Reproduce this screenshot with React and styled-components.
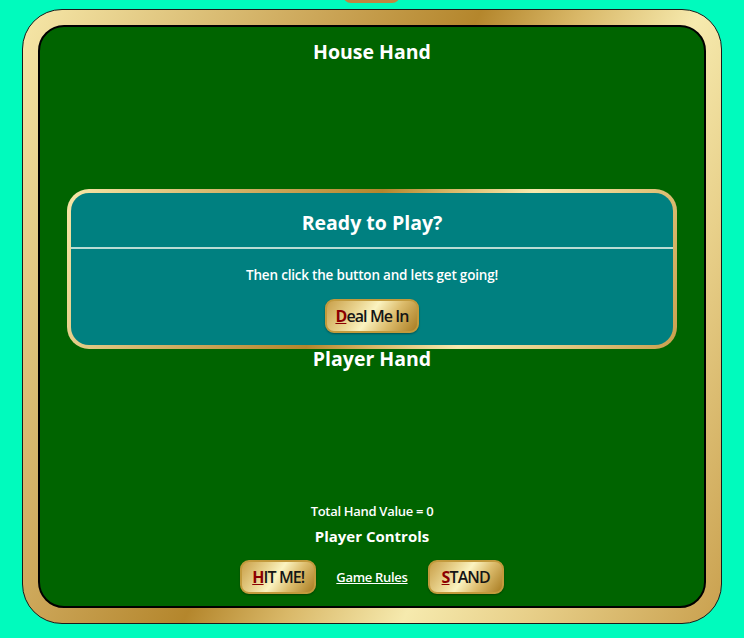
import React from 'react';
import styled, { createGlobalStyle } from 'styled-components';

const gold =
  'linear-gradient(116deg, #f6e7a8 0%, #dcc078 18%, #c9a253 32%, #b4862c 46%, #d9b868 56%, #f6eaae 68%, #e8d08a 80%, #c9a04e 100%)';

const GlobalStyle = createGlobalStyle`
  html, body {
    margin: 0;
    padding: 0;
    background: #00fbbd;
    font-family: "Open Sans", "Noto Sans", sans-serif;
  }
  body {
    position: relative;
  }
`;

// a tab of some menu, mostly scrolled above the page edge
const TopTab = styled.div`
  position: absolute;
  top: -30px;
  left: 343px;
  width: 57px;
  height: 33px;
  border-radius: 0 0 8px 8px;
  background: #bf873f;
`;

const Frame = styled.div`
  width: 700px;
  height: 615px;
  margin: 9px auto 0;
  box-sizing: border-box;
  padding: 15px;
  border: 1px solid #1a1a1a;
  border-radius: 40px;
  background: ${gold};
`;

const Table = styled.main`
  position: relative;
  height: 100%;
  box-sizing: border-box;
  display: flex;
  flex-direction: column;
  align-items: center;
  padding: 11px 0 12px;
  border: 2px solid #000;
  border-radius: 26px;
  background: #006400;
  color: #fff;
`;

const HandTitle = styled.h2`
  margin: 0;
  font-size: 19.5px;
  line-height: 27px;
  font-weight: 700;
`;

const HandArea = styled.div`
  width: 100%;
  height: ${(p) => p.$h}px;
`;

const Total = styled.p`
  margin: 0;
  font-size: 13px;
  line-height: 18px;
  font-weight: 600;
  letter-spacing: -0.3px;
`;

const ControlsTitle = styled.h3`
  margin: 6px 0 0;
  font-size: 15px;
  line-height: 20px;
  font-weight: 700;
`;

const ControlsRow = styled.div`
  display: flex;
  align-items: center;
  gap: 20px;
  margin-top: 14px;
`;

const GoldButton = styled.button`
  height: 34px;
  padding: 0 ${(p) => p.$pad || 9}px;
  border: 2px solid #c29a3c;
  border-radius: 9px;
  background: linear-gradient(125deg, #c9a04a 0%, #e9d38e 30%, #fbf3c0 48%, #dcbc6c 70%, #a97c22 100%);
  box-shadow: 0 1px 2px rgba(0, 0, 0, 0.35);
  font-family: "Open Sans", "Noto Sans", sans-serif;
  font-size: 16px;
  font-weight: 600;
  letter-spacing: -0.9px;
  color: #151515;
  cursor: pointer;
`;

const Key = styled.span`
  color: #8b0000;
  text-decoration: underline;
  font-weight: 700;
`;

const RulesLink = styled.a`
  color: #fff;
  font-size: 13px;
  font-weight: 600;
  letter-spacing: -0.3px;
  text-decoration: underline;
`;

const Modal = styled.section`
  position: absolute;
  top: 162px;
  left: 27px;
  width: 610px;
  box-sizing: border-box;
  padding: 4px;
  border-radius: 22px;
  background: ${gold};
`;

const ModalInner = styled.div`
  border-radius: 18px;
  background: #008080;
  overflow: hidden;
`;

const ModalHeader = styled.h2`
  margin: 0;
  padding: 16px 0 0;
  height: 56px;
  box-sizing: border-box;
  text-align: center;
  font-size: 19.5px;
  line-height: 27px;
  font-weight: 700;
  border-bottom: 2px solid #b9dcd4;
`;

const ModalBody = styled.div`
  display: flex;
  flex-direction: column;
  align-items: center;
  gap: 15px;
  padding: 17px 0 12px;
`;

const ModalText = styled.p`
  margin: 0;
  font-size: 13.5px;
  line-height: 18px;
  font-weight: 600;
  letter-spacing: -0.2px;
`;

const Label = ({ k, rest }) => (
  <>
    <Key>{k}</Key>
    {rest}
  </>
);

export default function App() {
  return (
    <>
      <GlobalStyle />
      <TopTab />
      <Frame>
        <Table>
          <HandTitle>House Hand</HandTitle>
          <HandArea $h={280} />
          <HandTitle>Player Hand</HandTitle>
          <HandArea $h={130} />
          <Total>Total Hand Value = 0</Total>
          <ControlsTitle>Player Controls</ControlsTitle>
          <ControlsRow>
            <GoldButton $pad={10}>
              <Label k="H" rest="IT ME!" />
            </GoldButton>
            <RulesLink href="#">Game Rules</RulesLink>
            <GoldButton $pad={12}>
              <Label k="S" rest="TAND" />
            </GoldButton>
          </ControlsRow>

          <Modal>
            <ModalInner>
              <ModalHeader>Ready to Play?</ModalHeader>
              <ModalBody>
                <ModalText>Then click the button and lets get going!</ModalText>
                <GoldButton $pad={8}>
                  <Label k="D" rest="eal Me In" />
                </GoldButton>
              </ModalBody>
            </ModalInner>
          </Modal>
        </Table>
      </Frame>
    </>
  );
}
